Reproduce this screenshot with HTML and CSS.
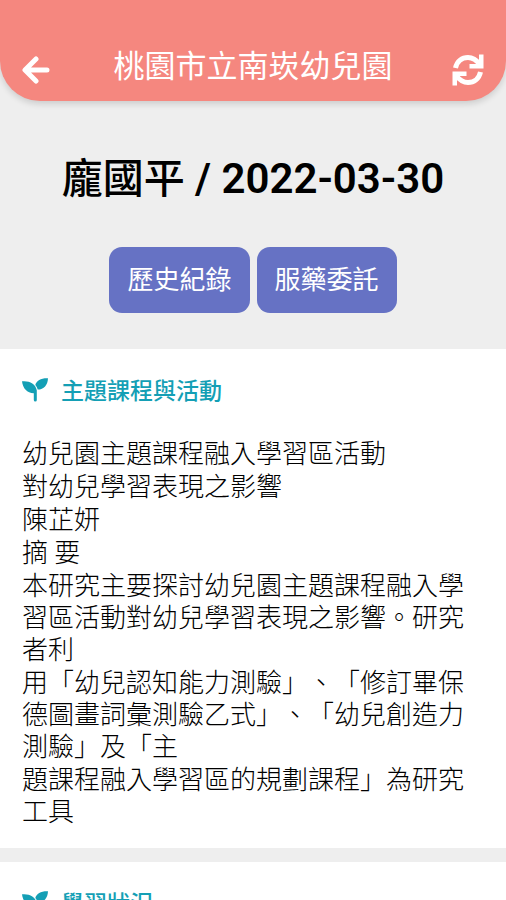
FILE: index.html
```html
<!DOCTYPE html>
<html lang="zh-Hant">
<head>
<meta charset="utf-8">
<meta name="viewport" content="width=device-width, initial-scale=1">
<title>桃園市立南崁幼兒園</title>
<link rel="stylesheet" href="styles.css">
</head>
<body>
<svg class="defs" aria-hidden="true">
  <symbol id="seedling" viewBox="0 0 26 24">
    <path d="M0 3.300C7 2.500 13.500 5.500 14.800 12.200V22q0 1.500-1.500 1.500t-1.500-1.500V15.200C5 15 .8 10.500 0 3.300Z"/>
    <path d="M26 .2C19.500-.2 14.500 2.500 13.300 7c1.100 1.300 1.900 2.700 2.400 4.600C22 11.600 25.700 7 26 .2Z"/>
  </symbol>
</svg>
<header class="topbar">
  <button class="icon-button" type="button" aria-label="返回">
    <svg class="icon-back" viewBox="0 0 28 28"><path d="M14 3 3 14l11 11M3.500 14H25"/></svg>
  </button>
  <h1 class="topbar-title">桃園市立南崁幼兒園</h1>
  <button class="icon-button" type="button" aria-label="重新整理">
    <svg class="icon-refresh" viewBox="0 0 32 32">
      <path class="arc" d="M3.500 14C5 7 10 3.500 16 3.500c4.500 0 8.500 2.500 12 7M28.500 18c-1.500 7-6.500 10.500-12.500 10.500-4.500 0-8.500-2.500-12-7"/>
      <path class="tip" d="M27 .5H31.500V14.500H17.500V10H27ZM5 31.500H.5V17.500H14.500V22H5Z"/>
    </svg>
  </button>
</header>
<main>
  <section class="summary">
    <h2 class="summary-title">龐國平 <span class="summary-date">/ 2022-03-30</span></h2>
    <div class="actions">
      <button class="action" type="button">歷史紀錄</button>
      <button class="action" type="button">服藥委託</button>
    </div>
  </section>
  <div class="cards">
    <section class="card">
      <h3 class="card-title"><svg class="icon-seedling" aria-hidden="true"><use href="#seedling"/></svg>主題課程與活動</h3>
      <div class="card-body">
        <p>幼兒園主題課程融入學習區活動</p>
        <p>對幼兒學習表現之影響</p>
        <p>陳芷妍</p>
        <p>摘 要</p>
        <p>本研究主要探討幼兒園主題課程融入學習區活動對幼兒學習表現之影響。研究者利</p>
        <p>用「幼兒認知能力測驗」、「修訂畢保德圖畫詞彙測驗乙式」、「幼兒創造力測驗」及「主</p>
        <p>題課程融入學習區的規劃課程」為研究工具</p>
      </div>
    </section>
    <section class="card">
      <h3 class="card-title"><svg class="icon-seedling" aria-hidden="true"><use href="#seedling"/></svg>學習狀況</h3>
    </section>
  </div>
</main>
</body>
</html>
```
FILE: styles.css
```css
* {
  box-sizing: border-box;
}

html {
  scrollbar-width: none;
}

body {
  margin: 0;
  background: #eee;
  color: #000;
  font-family: Roboto, "Noto Sans CJK TC", sans-serif;
  text-spacing-trim: space-all;
}

h1, h2, h3, p {
  margin: 0;
}

button {
  border: 0;
  padding: 0;
  font-family: inherit;
  cursor: pointer;
}

.defs {
  display: none;
}

.topbar {
  display: flex;
  align-items: center;
  justify-content: space-between;
  padding: 48px 22px 9px;
  border-radius: 0 0 40px 40px;
  background: #f5877f;
  box-shadow: 0 3px 6px rgba(0, 0, 0, 0.14);
  color: #fff;
}

.topbar-title {
  font-size: 31px;
  line-height: 38px;
  font-weight: 400;
  padding-bottom: 6px;
}

.icon-button {
  display: flex;
  width: 32px;
  background: none;
  color: inherit;
}

.icon-back {
  width: 28px;
  height: 28px;
  fill: none;
  stroke: currentColor;
  stroke-width: 5;
  stroke-linecap: round;
  stroke-linejoin: round;
}

.icon-refresh {
  width: 32px;
  height: 32px;
}

.icon-refresh .arc {
  fill: none;
  stroke: currentColor;
  stroke-width: 5;
}

.icon-refresh .tip {
  fill: currentColor;
}

.summary {
  padding: 48px 22px 36px;
  text-align: center;
}

.summary-title {
  font-size: 41px;
  line-height: 60px;
  font-weight: 500;
}

.summary-date {
  font-size: 42px;
  font-weight: 600;
}

.actions {
  display: flex;
  justify-content: center;
  gap: 7px;
  margin-top: 38px;
}

.action {
  padding: 13px 18px;
  border-radius: 13px;
  background: #6672c4;
  color: #fff;
  font-size: 26px;
  line-height: 40px;
}

.cards {
  display: grid;
  gap: 14px;
}

.card {
  padding: 23px 22px 20px;
  background: #fff;
}

.card-title {
  display: flex;
  align-items: center;
  gap: 13px;
  color: #149fb5;
  font-size: 23px;
  line-height: 40px;
  font-weight: 500;
}

.icon-seedling {
  width: 26px;
  height: 24px;
  margin-bottom: 4px;
  fill: currentColor;
}

.card-body {
  display: grid;
  gap: 1px;
  margin-top: 26px;
  font-size: 26px;
  line-height: 32px;
  font-weight: 300;
}
```
